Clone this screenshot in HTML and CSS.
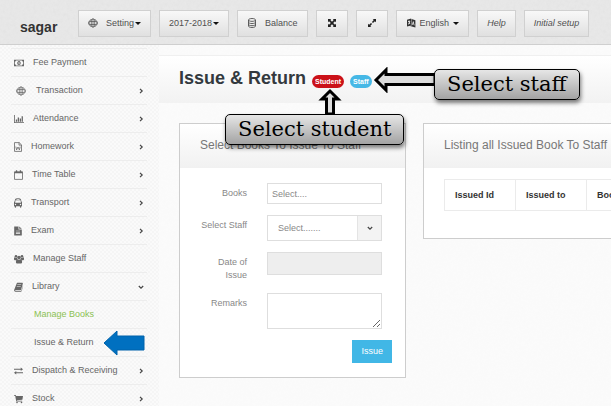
FILE: index.html
```html
<!DOCTYPE html>
<html lang="en">
<head>
  <meta charset="UTF-8">
  <title>Issue &amp; Return</title>
  <meta name="viewport" content="width=device-width">
  <link rel="stylesheet" href="styles.css">
</head>
<body>
<svg class="sprite" aria-hidden="true">
  <symbol id="globe" viewBox="0 0 10 10">
    <g fill="none" stroke="currentColor" stroke-width=".7">
      <circle cx="5" cy="5" r="3.900"/>
      <path d="M5 0v10M3.300 1.500v7M6.700 1.500v7M1.500 3.500h7M1.500 6.500h7M.4 3.500v3M9.600 3.500v3"/>
    </g>
  </symbol>
  <symbol id="database" viewBox="0 0 10 10">
    <path fill="none" stroke="currentColor" stroke-width=".9" d="M1.5 2c0-2 7-2 7 0v6c0 2-7 2-7 0zM1.5 2c0 1.8 7 1.8 7 0M1.5 4.2c0 1.8 7 1.8 7 0M1.5 6.3c0 1.8 7 1.8 7 0"/>
  </symbol>
  <symbol id="arrows" viewBox="0 0 10 10">
    <path fill="currentColor" d="M1 1h3.2L3.3 2l1.7 1.8L6.7 2 5.8 1H9v3.2l-1-.9L6.2 5 8 6.7l1-.9V9H5.800l.9-1L5 6.200 3.300 8l.9 1H1V5.800l1 .9L3.800 5 2 3.300l-1 .9z"/>
  </symbol>
  <symbol id="expand" viewBox="0 0 10 10">
    <path fill="currentColor" d="M5.700 1H9v3.300L7.900 3.200 6 5.100 4.900 4l1.900-1.900zM4 4.900 5.100 6 3.200 7.900 4.300 9H1V5.700l1.100 1.100z"/>
  </symbol>
  <symbol id="language" viewBox="0 0 10 10">
    <path fill="currentColor" fill-rule="evenodd" d="M1 1.800 5.200.6v6.800L1 8.600zM2 3v1h.8v1L2 6v.8l1.300-1 .9.4v-.8l-.5-.4.5-1.400V3l-.8.200V2.300h-.6v.900z"/>
    <path fill="currentColor" fill-rule="evenodd" d="M5.500 1 9.400 2.300v7.100L4 8l1.500-.5zM7 3.300 6 6.700l.6.200.2-.7 1 .3.200.8.600.2-1-4zM7.200 4.700l.3 1-.5-.1z"/>
  </symbol>
  <symbol id="money" viewBox="0 0 10 10">
    <path fill="currentColor" fill-rule="evenodd" d="M0 1.700h10v6.600H0zM.8 3.700v2.600q1 .1 1.200 1.200h6q.1-1.100 1.200-1.200V3.700Q8.100 3.600 8 2.500H2q-.1 1.100-1.200 1.200z"/>
    <path fill="currentColor" fill-rule="evenodd" d="M5 2.900c2.300 0 2.300 4.200 0 4.200s-2.300-4.200 0-4.200zM4.400 4v.5h.3v1.300h-.3v.5h1.300v-.5h-.3V4z"/>
  </symbol>
  <symbol id="chart" viewBox="0 0 10 10">
    <path fill="currentColor" d="M0 1h.8v7.200H10V9H0zM1.800 5.500h1.300v2.200H1.800zM3.700 3.500H5v4.200H3.700zM5.700 4.500H7v3.200H5.700zM7.600 2.200h1.300v5.500H7.600z"/>
  </symbol>
  <symbol id="word" viewBox="0 0 8 10">
    <path fill="none" stroke="currentColor" stroke-width=".8" d="M.5.600h4.700l2.300 2.300v6.500h-7zM5 .6v2.500h2.500M1.800 4.600l.8 3.300L4 5l1.400 2.900.8-3.300"/>
  </symbol>
  <symbol id="calendar" viewBox="0 0 9 10">
    <path fill="none" stroke="currentColor" stroke-width=".8" d="M.5 1.800h8v7.600h-8z"/>
    <path fill="currentColor" d="M.5 1.800h8v1.500h-8zM1.900.3h1.300v2.200H1.900zM5.800.3h1.300v2.200H5.800z"/>
  </symbol>
  <symbol id="bus" viewBox="0 0 8 10">
    <path fill="currentColor" fill-rule="evenodd" d="M1 1.500Q1.300.3 4 .3T7 1.500l.4 2.100q.6.100.6 1.200v3.400h-.7v.9q0 .6-.7.600t-.7-.6v-.9H2.100v.9q0 .6-.7.600t-.7-.6v-.9H0V4.800q0-1.100.600-1.200zM2.500 1.100v.6h3v-.6zM1.500 2.300 1.100 4.800h5.800l-.4-2.500zM1.500 5.800a.7.700 0 1 0 0 1.400.7.700 0 1 0 0-1.400zM6.500 5.800a.7.700 0 1 0 0 1.400.7.700 0 1 0 0-1.400z"/>
  </symbol>
  <symbol id="file" viewBox="0 0 8 10">
    <path fill="currentColor" fill-rule="evenodd" d="M.2.500h4.300v3h3.300v6H.2zM5.200.5l2.600 2.300H5.200zM1.900 4.700v.6h4.200v-.6zM1.900 6v.6h4.200V6zM1.900 7.300v.6h4.200v-.6z"/>
  </symbol>
  <symbol id="users" viewBox="0 0 10 10">
    <g fill="currentColor">
      <circle cx="2" cy="2.200" r="1.300"/>
      <circle cx="8" cy="2.200" r="1.300"/>
      <circle cx="5" cy="3.500" r="1.800"/>
      <path d="M0 4q.3-1 1-.5 1 .5 1.900 0 0 1.200.8 1.800L2 6.200H.8Q0 6.200 0 5zM10 4q-.3-1-1-.5-1 .5-1.900 0 0 1.200-.8 1.800L8 6.200h1.200q.8 0 .8-1.200zM1.900 8q0-2.700 1.500-2.700 1.600.9 3.200 0 1.500 0 1.500 2.700 0 1.500-1.200 1.500H3.100Q1.900 9.500 1.900 8z"/>
    </g>
  </symbol>
  <symbol id="book" viewBox="0 0 9 10">
    <path fill="currentColor" fill-rule="evenodd" d="M3 .8h5.300q.8.200.5 1L7.200 7.400q-.3.900-1.200.9H1.400q-.5.600.1.800h5.200q.5-.1.700-.7L9 3.200v1L7.800 8.800q-.3.900-1.200.9H1.400Q0 9.600.1 8zM3.400 2.500l-.2.600h3.900l.2-.6zM2.900 4l-.2.600h3.900l.2-.6z"/>
  </symbol>
  <symbol id="exchange" viewBox="0 0 10 10">
    <path fill="currentColor" d="M0 2.500h7.500V1L10 3.100 7.500 5.100V3.700H0zM10 6.300H2.500V4.900L0 6.900 2.500 9V7.500H10z"/>
  </symbol>
  <symbol id="cart" viewBox="0 0 9 10">
    <path fill="currentColor" d="M0 1h1.800l.3 1H9l-.6 3.700-5.600.5.100.6h5.300v.8H2.200L1.200 1.800H0z"/>
    <circle cx="3" cy="8.500" r=".8" fill="currentColor"/>
    <circle cx="7.500" cy="8.500" r=".8" fill="currentColor"/>
  </symbol>
  <symbol id="angle" viewBox="0 0 6 6">
    <path fill="none" stroke="currentColor" stroke-width="1.200" d="M2 .8 4.200 3 2 5.200"/>
  </symbol>
</svg>

<header class="topbar">
  <a class="brand" href="#">sagar</a>
  <button class="tool" type="button"><svg class="tool-icon"><use href="#globe"/></svg>Setting<span class="caret"></span></button>
  <button class="tool" type="button">2017-2018<span class="caret"></span></button>
  <button class="tool" type="button"><svg class="tool-icon"><use href="#database"/></svg>Balance</button>
  <button class="tool dark" type="button" aria-label="Full screen"><svg><use href="#arrows"/></svg></button>
  <button class="tool dark" type="button" aria-label="Expand"><svg><use href="#expand"/></svg></button>
  <button class="tool" type="button"><svg class="lang-icon"><use href="#language"/></svg>English<span class="caret spaced"></span></button>
  <button class="tool" type="button"><em>Help</em></button>
  <button class="tool" type="button"><em>Initial setup</em></button>
</header>

<div class="shell">
  <nav class="sidebar">
    <ul class="menu">
      <li><a href="#"><svg><use href="#money"/></svg>Fee Payment</a></li>
      <li><a class="wide" href="#"><svg><use href="#globe"/></svg>Transaction<svg class="angle"><use href="#angle"/></svg></a></li>
      <li><a href="#"><svg><use href="#chart"/></svg>Attendance<svg class="angle"><use href="#angle"/></svg></a></li>
      <li><a href="#"><svg class="w8"><use href="#word"/></svg>Homework<svg class="angle"><use href="#angle"/></svg></a></li>
      <li><a href="#"><svg class="w9"><use href="#calendar"/></svg>Time Table<svg class="angle"><use href="#angle"/></svg></a></li>
      <li><a href="#"><svg class="w8"><use href="#bus"/></svg>Transport<svg class="angle"><use href="#angle"/></svg></a></li>
      <li><a href="#"><svg class="w8"><use href="#file"/></svg>Exam<svg class="angle"><use href="#angle"/></svg></a></li>
      <li><a href="#"><svg><use href="#users"/></svg>Manage Staff</a></li>
      <li><a href="#"><svg class="w9"><use href="#book"/></svg>Library<svg class="angle open"><use href="#angle"/></svg></a></li>
      <li><a class="sub active" href="#">Manage Books</a></li>
      <li>
        <a class="sub" href="#">Issue &amp; Return</a>
        <svg class="pointer" viewBox="0 0 42 26"><path fill="#0070c0" stroke="#0063ab" stroke-linejoin="round" d="M1 13 14 1v5h27v14H14v5z"/></svg>
      </li>
      <li><a href="#"><svg class="w9"><use href="#exchange"/></svg>Dispatch &amp; Receiving<svg class="angle"><use href="#angle"/></svg></a></li>
      <li><a href="#"><svg class="w9"><use href="#cart"/></svg>Stock<svg class="angle"><use href="#angle"/></svg></a></li>
    </ul>
  </nav>

  <main class="content">
    <div class="page-head">
      <h1>Issue &amp; Return</h1>
      <a class="badge red" href="#">Student</a>
      <a class="badge blue" href="#">Staff</a>
    </div>

    <div class="cards">
      <section class="card">
        <h2>Select Books To Issue To Staff</h2>
        <form class="issue-form">
          <label for="books">Books</label>
          <input id="books" type="text" value="Select....">
          <label for="staff">Select Staff</label>
          <div class="select">
            <select id="staff"><option>Select.......</option></select>
            <span class="select-arrow"><svg class="angle open"><use href="#angle"/></svg></span>
          </div>
          <label for="date">Date of<br>Issue</label>
          <input id="date" type="text" readonly>
          <label for="remarks">Remarks</label>
          <textarea id="remarks"></textarea>
          <button class="submit" type="button">Issue</button>
        </form>
      </section>

      <section class="card">
        <h2>Listing all Issued Book To Staff</h2>
        <div class="listing">
          <table>
            <thead>
              <tr><th>Issued Id</th><th>Issued to</th><th>Book</th></tr>
            </thead>
          </table>
        </div>
      </section>
    </div>

    <!-- help callouts, over the page -->
    <svg class="arrow-up" viewBox="0 0 24 28"><path fill="#ddd" stroke="#000" stroke-width="3" d="M12 3 4 11h4.500v15h7V11H20z"/></svg>
    <svg class="arrow-left" viewBox="0 0 64 26"><path fill="#ddd" stroke="#000" stroke-width="3" d="M3 13 13 3v4.500h49v10H13V23z"/></svg>
    <div class="callout student">Select student</div>
    <div class="callout staff">Select staff</div>
  </main>
</div>
</body>
</html>
```
FILE: styles.css
```css
* {
  box-sizing: border-box;
}
body {
  display: flex;
  flex-direction: column;
  height: 100vh;
  margin: 0;
  overflow: hidden;
  font-family: 'Liberation Sans', Arial, sans-serif;
  font-size: 9px;
  line-height: 13px;
  color: #666;
  background-color: #fbfbfb;
}
a {
  color: inherit;
  text-decoration: none;
}
button, input, select, textarea {
  font: inherit;
  color: inherit;
  margin: 0;
}
svg {
  flex: none;
  width: 10px;
  height: 10px;
}
.sprite {
  position: absolute;
  width: 0;
  height: 0;
}

/* top bar */
.topbar {
  display: flex;
  flex: none;
  align-items: center;
  gap: 8px;
  height: 45px;
  padding: 2px 8px 0 20px;
  border-bottom: 1px solid #cfcfcf;
  background-color: #e8e8e8;
  background-image: url("data:image/svg+xml,%3Csvg xmlns='http://www.w3.org/2000/svg' width='120' height='120'%3E%3Cfilter id='n'%3E%3CfeTurbulence type='fractalNoise' baseFrequency='.3' numOctaves='3' stitchTiles='stitch'/%3E%3CfeColorMatrix type='saturate' values='0'/%3E%3C/filter%3E%3Crect width='120' height='120' filter='url(%23n)' opacity='.07'/%3E%3C/svg%3E");
}
.brand {
  flex: none;
  width: 50px;
  padding-top: 8px;
  font-size: 14px;
  font-weight: bold;
  color: #333;
}
.tool {
  display: flex;
  flex: none;
  align-items: center;
  justify-content: center;
  min-width: 32px;
  height: 27px;
  padding: 0 9px;
  border: 1px solid #d0d0d0;
  background: linear-gradient(#f8f8f8, #e0e0e0);
  color: #505050;
  white-space: nowrap;
}
.tool.dark {
  color: #222;
}
.tool-icon {
  margin-right: 8px;
}
.lang-icon {
  margin-right: 4px;
  color: #333;
}
.caret {
  margin-left: 1px;
  border: 3px solid transparent;
  border-top-color: #111;
  border-bottom: 0;
}
.caret.spaced {
  margin-left: 4px;
}

.shell {
  display: flex;
  flex: 1;
  min-height: 0;
}

/* sidebar */
.sidebar {
  flex: none;
  width: 159px;
  padding: 3px 12px 0 11px;
  overflow: hidden;
  background-color: #fafafa;
  background-image:
    linear-gradient(45deg, #f5f5f5 25%, transparent 25%, transparent 75%, #f5f5f5 75%),
    linear-gradient(45deg, #f5f5f5 25%, transparent 25%, transparent 75%, #f5f5f5 75%);
  background-size: 4px 4px;
  background-position: 0 0, 2px 2px;
}
.menu {
  margin: 0;
  padding: 0;
  list-style-type: none;
}
.menu li {
  position: relative;
  border-top: 1px solid #ededed;
}
.menu a {
  display: flex;
  align-items: center;
  gap: 9px;
  height: 27px;
  padding: 0 3px;
}
.menu .wide {
  padding-left: 5px;
  gap: 10px;
}
.menu .sub {
  padding-left: 23px;
}
.menu .active {
  color: #8cc152;
}
.menu .w8 {
  width: 8px;
}
.menu .w9 {
  width: 9px;
}
.angle {
  width: 6px;
  height: 6px;
  color: #444;
}
.menu .angle {
  margin-left: auto;
}
.angle.open {
  transform: rotate(90deg);
}
.pointer {
  position: absolute;
  top: 1px;
  right: 2px;
  width: 42px;
  height: 26px;
}

/* content */
.content {
  position: relative;
  flex: 1;
  min-width: 0;
  padding-top: 10px;
  overflow: hidden;
  background-image: url("data:image/svg+xml,%3Csvg xmlns='http://www.w3.org/2000/svg' width='120' height='120'%3E%3Cfilter id='n'%3E%3CfeTurbulence type='fractalNoise' baseFrequency='.4' numOctaves='2' stitchTiles='stitch'/%3E%3CfeColorMatrix type='saturate' values='0'/%3E%3C/filter%3E%3Crect width='120' height='120' filter='url(%23n)' opacity='.02'/%3E%3C/svg%3E");
}
.page-head {
  display: flex;
  align-items: center;
  gap: 6px;
  height: 48px;
  padding: 0 20px;
  border-top: 1px solid #f0f0f0;
  background: linear-gradient(#fff, #f2f2f2);
}
h1 {
  margin: 0;
  padding-bottom: 4px;
  font-size: 18px;
  line-height: 20px;
  color: #33393e;
}
.badge {
  margin-top: 4px;
  padding: 0 3px;
  border-radius: 7px;
  font-size: 7px;
  font-weight: bold;
  color: #fff;
}
.red {
  background-color: #cb1119;
}
.blue {
  background-color: #46b8e6;
}
.cards {
  display: grid;
  grid-template-columns: minmax(227px, 1fr) minmax(480px, 2fr);
  gap: 17px;
  align-items: start;
  padding: 20px;
}
.card {
  border: 1px solid #cdcdcd;
  background-color: #fff;
}
h2 {
  margin: 0;
  padding: 13px 20px 15px;
  font-size: 12px;
  font-weight: normal;
  line-height: 16px;
  color: #777;
  background: linear-gradient(#fff, #f1f1f1);
}
.issue-form {
  display: grid;
  grid-template-columns: 47px 1fr;
  gap: 11px 20px;
  padding: 15px 23px 14px 20px;
  color: #888;
}
.issue-form label {
  padding-top: 4px;
  text-align: right;
}
.issue-form input,
.issue-form textarea,
.select {
  width: 100%;
  border: 1px solid #dedede;
  border-radius: 0;
  background-color: #fff;
}
.issue-form input {
  height: 21px;
  padding: 0 4px;
}
.issue-form input[readonly] {
  height: 23px;
  background-color: #eee;
}
.issue-form textarea {
  display: block;
  height: 36px;
}
.select {
  display: flex;
  height: 26px;
}
.select select {
  flex: 1;
  min-width: 0;
  padding: 0 10px;
  border: 0;
  background: none;
  appearance: none;
}
.select-arrow {
  display: flex;
  align-items: center;
  justify-content: center;
  width: 24px;
  border-left: 1px solid #e4e4e4;
  background-color: #f3f3f3;
}
.submit {
  grid-column: 2;
  justify-self: end;
  height: 23px;
  margin-right: -10px;
  padding: 0 9px;
  border: 0;
  background-color: #41b7e6;
  color: #fff;
}
.listing {
  padding: 11px 20px 27px;
}
table {
  width: 100%;
  border-collapse: collapse;
  table-layout: fixed;
}
th {
  padding: 8px 10px;
  border: 1px solid #ebebeb;
  line-height: 14px;
  text-align: left;
  color: #333;
}
th:nth-child(-n+2) {
  width: 71px;
}

/* callouts */
.callout {
  position: absolute;
  padding: 0 12px;
  border: 1px solid #000;
  border-radius: 5px;
  background: linear-gradient(#e6e6e6, #a3a3a3);
  box-shadow: 1px 3px 4px rgba(0, 0, 0, .5);
  font-family: Rockwell, 'DejaVu Serif', serif;
  font-size: 21px;
  line-height: 29px;
  color: #000;
  white-space: nowrap;
}
.callout.student {
  top: 69px;
  left: 66px;
}
.callout.staff {
  top: 24px;
  left: 275px;
}
.arrow-up {
  position: absolute;
  top: 43px;
  left: 159px;
  width: 24px;
  height: 28px;
}
.arrow-left {
  position: absolute;
  top: 22px;
  left: 214px;
  width: 64px;
  height: 26px;
}
```
